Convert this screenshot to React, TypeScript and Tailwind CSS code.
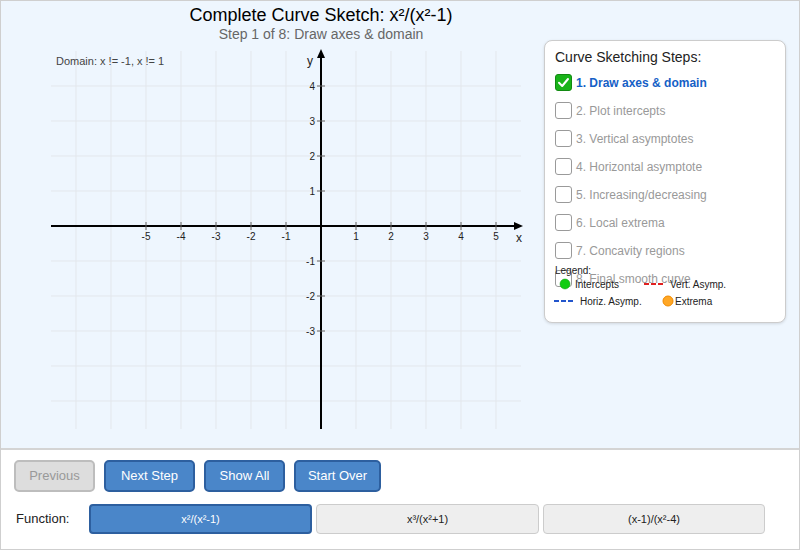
import React from "react";

const steps = [
  "1. Draw axes & domain",
  "2. Plot intercepts",
  "3. Vertical asymptotes",
  "4. Horizontal asymptote",
  "5. Increasing/decreasing",
  "6. Local extrema",
  "7. Concavity regions",
  "8. Final smooth curve",
];

function Graph() {
  const vx = [75, 110, 145, 180, 215, 250, 285, 320, 355, 390, 425, 460, 495];
  const hy = [85, 120, 155, 190, 225, 260, 295, 330, 365, 400];
  const xt = [-5, -4, -3, -2, -1, 1, 2, 3, 4, 5];
  const yt = [4, 3, 2, 1, -1, -2, -3];
  return (
    <svg
      className="absolute left-0 top-[44px]"
      width={540}
      height={396}
      viewBox="0 44 540 396"
      fontFamily="'Liberation Sans', Arial, sans-serif"
    >
      {vx.map((x) => (
        <line key={"v" + x} x1={x} y1={50} x2={x} y2={428} stroke="#e3e7ec" strokeWidth={1} />
      ))}
      {hy.map((y) => (
        <line key={"h" + y} x1={50} y1={y} x2={520} y2={y} stroke="#e3e7ec" strokeWidth={1} />
      ))}
      <text x={55} y={64} fontSize={11} fill="#444">
        Domain: x != -1, x != 1
      </text>
      <line x1={50} y1={225} x2={514} y2={225} stroke="#000" strokeWidth={2} />
      <polygon points="522,225 513,221 513,229" fill="#000" />
      <line x1={320} y1={428} x2={320} y2={56} stroke="#000" strokeWidth={2} />
      <polygon points="320,48 316,57 324,57" fill="#000" />
      {xt.map((v) => {
        const x = 320 + v * 35;
        return (
          <g key={"xt" + v}>
            <line x1={x} y1={221} x2={x} y2={229} stroke="#666" strokeWidth={1} />
            <text x={x} y={239} fontSize={10} fill="#222" textAnchor="middle">
              {v}
            </text>
          </g>
        );
      })}
      {yt.map((v) => {
        const y = 225 - v * 35;
        return (
          <g key={"yt" + v}>
            <line x1={316} y1={y} x2={324} y2={y} stroke="#666" strokeWidth={1} />
            <text x={314} y={y + 3.5} fontSize={10} fill="#222" textAnchor="end">
              {v}
            </text>
          </g>
        );
      })}
      <text x={515} y={241} fontSize={12} fill="#222">
        x
      </text>
      <text x={306} y={64} fontSize={12} fill="#222">
        y
      </text>
    </svg>
  );
}

function Legend() {
  return (
    <svg
      className="absolute left-0 top-[222px]"
      width={240}
      height={50}
      viewBox="0 0 240 50"
      fontFamily="'Liberation Sans', Arial, sans-serif"
    >
      <text x={10} y={11} fontSize={10} fill="#222">
        Legend:
      </text>
      <circle cx={20} cy={21} r={5} fill="#11cc11" stroke="#0a9a0a" strokeWidth={0.5} />
      <text x={30} y={25} fontSize={10} fill="#222">
        Intercepts
      </text>
      <line x1={99} y1={21} x2={119} y2={21} stroke="#e02020" strokeWidth={2} strokeDasharray="5 2" />
      <text x={125} y={25} fontSize={10} fill="#222">
        Vert. Asymp.
      </text>
      <line x1={9} y1={38} x2={29} y2={38} stroke="#2255cc" strokeWidth={2} strokeDasharray="5 2" />
      <text x={35} y={42} fontSize={10} fill="#222">
        Horiz. Asymp.
      </text>
      <circle cx={123} cy={38} r={5} fill="#ffa726" stroke="#f08a00" strokeWidth={1} />
      <text x={130} y={42} fontSize={10} fill="#222">
        Extrema
      </text>
    </svg>
  );
}

function Check({ checked }: { checked: boolean }) {
  if (checked) {
    return (
      <div className="w-[17px] h-[17px] rounded-[3px] bg-[#19b319] border border-[#128a12] flex items-center justify-center shrink-0">
        <svg width="13" height="13" viewBox="0 0 13 13">
          <path d="M2 6.8 L5.2 10 L11 3" stroke="#fff" strokeWidth="2" fill="none" strokeLinecap="round" strokeLinejoin="round" />
        </svg>
      </div>
    );
  }
  return <div className="w-[17px] h-[17px] rounded-[3px] bg-white border border-[#9a9a9a] shrink-0" />;
}

export default function App() {
  return (
    <div className="w-[800px] h-[550px] border border-[#cfcfcf] flex flex-col font-['Liberation_Sans',Arial,sans-serif] text-[#222]">
      <div className="relative h-[449px] shrink-0 bg-[#eef6fe] border-b-2 border-[#d4d4d4]">
        <div className="w-[640px] flex flex-col items-center pt-[3px]">
          <div className="text-[18px] leading-[22px] text-black">Complete Curve Sketch: x²/(x²-1)</div>
          <div className="text-[14px] leading-[17px] text-[#666]">Step 1 of 8: Draw axes &amp; domain</div>
        </div>
        <Graph />
        <div className="absolute left-[543px] top-[39px] w-[242px] h-[283px] bg-white border border-[#cccccc] rounded-[8px] shadow-[0_1px_3px_rgba(0,0,0,0.12)] px-[10px] pt-[6px]">
          <div className="text-[14px] leading-[20px] text-[#222] mb-[7px]">Curve Sketching Steps:</div>
          <div className="flex flex-col gap-[11px]">
            {steps.map((s, i) => (
              <div key={s} className="flex items-center gap-[4px] h-[17px]">
                <Check checked={i === 0} />
                <span
                  className={
                    i === 0
                      ? "text-[12px] font-bold text-[#1560c6]"
                      : "text-[12px] text-[#999]"
                  }
                >
                  {s}
                </span>
              </div>
            ))}
          </div>
          <Legend />
        </div>
      </div>
      <div className="flex-1 bg-white px-[13px] pt-[10px] flex flex-col gap-[11px]">
        <div className="flex gap-[9px]">
          <button className="w-[81px] h-[32px] rounded-[5px] border-2 border-[#bdbdbd] bg-[#dddddd] text-[13px] text-[#999]">
            Previous
          </button>
          <button className="w-[91px] h-[32px] rounded-[5px] border-2 border-[#2d5f9f] bg-[#4a86c9] text-[13px] text-white">
            Next Step
          </button>
          <button className="w-[81px] h-[32px] rounded-[5px] border-2 border-[#2d5f9f] bg-[#4a86c9] text-[13px] text-white">
            Show All
          </button>
          <button className="w-[87px] h-[32px] rounded-[5px] border-2 border-[#2d5f9f] bg-[#4a86c9] text-[13px] text-white">
            Start Over
          </button>
        </div>
        <div className="flex items-center pt-[1px]">
          <div className="w-[75px] pl-[2px] text-[13px] text-[#222]">Function:</div>
          <div className="flex gap-[4px]">
            <button className="w-[223px] h-[30px] rounded-[4px] border-2 border-[#2d5f9f] bg-[#4a86c9] text-[11px] text-white">
              x²/(x²-1)
            </button>
            <button className="w-[223px] h-[30px] rounded-[4px] border border-[#cccccc] bg-[#eeeeee] text-[11px] text-[#222]">
              x³/(x²+1)
            </button>
            <button className="w-[222px] h-[30px] rounded-[4px] border border-[#cccccc] bg-[#eeeeee] text-[11px] text-[#222]">
              (x-1)/(x²-4)
            </button>
          </div>
        </div>
      </div>
    </div>
  );
}
